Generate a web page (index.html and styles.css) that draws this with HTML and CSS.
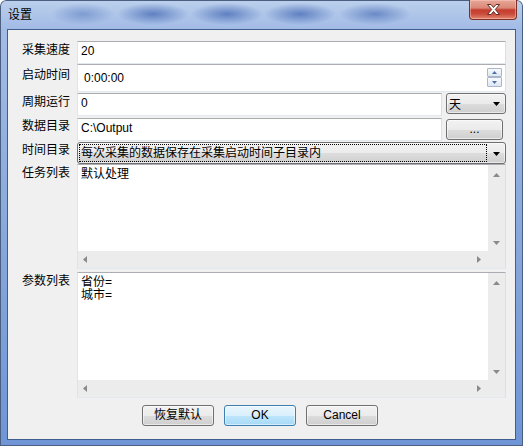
FILE: index.html
```html
<!DOCTYPE html>
<html lang="zh">
<head>
<meta charset="utf-8">
<title>设置</title>
<link rel="stylesheet" href="styles.css">
</head>
<body>
<div class="window">
  <div class="titlebar">
    <span class="title">设置</span>
    <div class="close">
      <svg width="13" height="11" viewBox="0 0 13 11"><path d="M0.5 0.5h3.5l2.5 3 2.5-3h3.5l-4.2 5 4.2 5h-3.5l-2.5-3-2.5 3h-3.5l4.2-5z" fill="#fff" stroke="#6b2a22" stroke-width="1"/></svg>
    </div>
  </div>
  <div class="client">
    <div class="row r1">
      <div class="lbl">采集速度</div>
      <div class="edit grow">20</div>
    </div>
    <div class="row r2">
      <div class="lbl">启动时间</div>
      <div class="edit grow spin-edit">
        <span class="spin-text">0:00:00</span>
        <div class="spin">
          <div class="spin-btn up"><svg width="5" height="3" viewBox="0 0 5 3"><path d="M0 3h5L2.5 0z" fill="#4d6fa8"/></svg></div>
          <div class="spin-btn down"><svg width="5" height="3" viewBox="0 0 5 3"><path d="M0 0h5L2.5 3z" fill="#4d6fa8"/></svg></div>
        </div>
      </div>
    </div>
    <div class="row r3">
      <div class="lbl">周期运行</div>
      <div class="edit short">0</div>
      <div class="btn combo small">
        <span class="combo-text">天</span>
        <span class="drop"><svg width="7" height="4" viewBox="0 0 7 4"><path d="M0 0h7L3.5 4z" fill="#000"/></svg></span>
      </div>
    </div>
    <div class="row r4">
      <div class="lbl">数据目录</div>
      <div class="edit short">C:\Output</div>
      <div class="btn dots">...</div>
    </div>
    <div class="row r5">
      <div class="lbl">时间目录</div>
      <div class="btn combo wide">
        <span class="focus">每次采集的数据保存在采集启动时间子目录内</span>
        <span class="drop"><svg width="7" height="4" viewBox="0 0 7 4"><path d="M0 0h7L3.5 4z" fill="#000"/></svg></span>
      </div>
    </div>
    <div class="row r6">
      <div class="lbl">任务列表</div>
      <div class="memo">
        <div class="memo-text">默认处理</div>
        <div class="vbar">
          <svg width="7" height="4" viewBox="0 0 7 4"><path d="M0 4h7L3.5 0z" fill="#8a8a8a"/></svg>
          <svg width="7" height="4" viewBox="0 0 7 4"><path d="M0 0h7L3.5 4z" fill="#8a8a8a"/></svg>
        </div>
        <div class="hbar">
          <svg width="4" height="7" viewBox="0 0 4 7"><path d="M4 0v7L0 3.5z" fill="#8a8a8a"/></svg>
          <svg width="4" height="7" viewBox="0 0 4 7"><path d="M0 0v7L4 3.5z" fill="#8a8a8a"/></svg>
        </div>
        <div class="corner"></div>
      </div>
    </div>
    <div class="row r7">
      <div class="lbl">参数列表</div>
      <div class="memo">
        <div class="memo-text">省份=<br>城市=</div>
        <div class="vbar">
          <svg width="7" height="4" viewBox="0 0 7 4"><path d="M0 4h7L3.5 0z" fill="#8a8a8a"/></svg>
          <svg width="7" height="4" viewBox="0 0 7 4"><path d="M0 0h7L3.5 4z" fill="#8a8a8a"/></svg>
        </div>
        <div class="hbar">
          <svg width="4" height="7" viewBox="0 0 4 7"><path d="M4 0v7L0 3.5z" fill="#8a8a8a"/></svg>
          <svg width="4" height="7" viewBox="0 0 4 7"><path d="M0 0v7L4 3.5z" fill="#8a8a8a"/></svg>
        </div>
        <div class="corner"></div>
      </div>
    </div>
    <div class="buttons">
      <div class="btn push">恢复默认</div>
      <div class="btn push default">OK</div>
      <div class="btn push">Cancel</div>
    </div>
  </div>
</div>
</body>
</html>
```

FILE: styles.css
```css
* { box-sizing: border-box; }

body {
  margin: 0;
  font-family: "Liberation Sans", "Noto Sans CJK SC", sans-serif;
  font-size: 12px;
  color: #000;
}

.window {
  width: 523px;
  height: 446px;
  border-radius: 6px 6px 0 0;
  background:
    radial-gradient(32px 11px at 83px 14px, rgba(66, 104, 180, .45), rgba(66, 104, 180, 0)),
    radial-gradient(36px 11px at 153px 14px, rgba(60, 98, 176, .7), rgba(60, 98, 176, 0)),
    radial-gradient(36px 11px at 227px 14px, rgba(60, 98, 176, .7), rgba(60, 98, 176, 0)),
    radial-gradient(36px 11px at 300px 14px, rgba(60, 98, 176, .7), rgba(60, 98, 176, 0)),
    radial-gradient(36px 11px at 375px 14px, rgba(60, 98, 176, .6), rgba(60, 98, 176, 0)),
    linear-gradient(#bcd0ec, #a3bce6 28px, #93b1e0 140px, #6f95d6 446px);
  box-shadow: inset 0 0 0 1px #4b5f80;
}

.titlebar {
  height: 29px;
  display: flex;
  align-items: flex-start;
  padding-left: 8px;
}

.title {
  flex: 1;
  padding-top: 6px;
  line-height: 16px;
  font-family: "Noto Sans CJK SC", sans-serif;
}

.close {
  width: 48px;
  height: 20px;
  margin-right: 6px;
  border: 1px solid #7c3026;
  border-top: none;
  border-radius: 0 0 4px 4px;
  background: linear-gradient(#e7a797 0%, #da8877 42%, #c53e30 52%, #c84a3a 72%, #e2866f 100%);
  box-shadow: inset 0 0 0 1px rgba(255, 210, 200, .45);
  display: flex;
  align-items: center;
  justify-content: center;
}

.client {
  margin-left: 7px;
  width: 509px;
  height: 411px;
  background: #f0f0f0;
  border: 1px solid #3f5d8f;
  padding: 11px 9px 0 0;
}

.row {
  display: flex;
  align-items: flex-start;
}

.lbl {
  width: 69px;
  flex: none;
  padding-right: 7px;
  padding-top: 2px;
  text-align: right;
  line-height: 14px;
  white-space: nowrap;
}

.r1 { height: 23px; }
.r2 { height: 28px; }
.r3 { height: 23px; margin-top: 1px; }
.r4 { height: 23px; margin-top: 2px; }
.r5 { height: 22px; margin-top: 1px; }
.r6 { height: 105px; }
.r7 { height: 126px; margin-top: 3px; }

.r2 .lbl { padding-top: 4px; }
.r4 .lbl, .r5 .lbl { padding-top: 1px; }

.edit {
  height: 100%;
  background: #fff;
  border: 1px solid;
  border-color: #abadb3 #dbdfe6 #e3e9ef #e2e3ea;
  padding: 2px 3px 0;
  line-height: 15px;
  white-space: nowrap;
}

.grow { flex: 1; }
.short { width: 365px; flex: none; }

.spin-edit {
  display: flex;
  align-items: flex-start;
  padding: 0;
}

.spin-text {
  flex: 1;
  padding: 6px 0 0 6px;
  line-height: 15px;
}

.spin {
  display: flex;
  flex-direction: column;
  margin: 3px 3px 0 0;
}

.spin-btn {
  width: 15px;
  border: 1px solid #a9b6cc;
  border-radius: 1px;
  background: linear-gradient(#f8fafd, #dfe6f0);
  display: flex;
  align-items: center;
  justify-content: center;
}

.spin-btn.up { height: 9px; }
.spin-btn.down { height: 10px; }

.btn {
  border: 1px solid #707070;
  border-radius: 3px;
  background: linear-gradient(#f2f2f2 0%, #ebebeb 50%, #dddddd 51%, #cfcfcf 100%);
  box-shadow: inset 0 0 0 1px rgba(255, 255, 255, .55);
  flex: none;
}

.combo {
  display: flex;
  align-items: stretch;
}

.combo.small {
  width: 60px;
  height: 21px;
  margin-left: 4px;
}

.combo.wide {
  width: 429px;
  height: 22px;
}

.combo-text {
  flex: 1;
  padding-left: 2px;
  line-height: 19px;
  font-family: "Noto Sans CJK SC", sans-serif;
}

.focus {
  flex: 1;
  margin: 1px 0 1px 1px;
  border: 1px dotted #000;
  padding-left: 1px;
  line-height: 16px;
  white-space: nowrap;
  overflow: hidden;
}

.drop {
  width: 18px;
  flex: none;
  display: flex;
  align-items: center;
  justify-content: center;
  padding-top: 1px;
}

.dots {
  width: 57px;
  height: 21px;
  margin: 1px 0 0 4px;
  text-align: center;
  line-height: 19px;
}

.memo {
  flex: 1;
  height: 100%;
  display: grid;
  grid-template-columns: 1fr 17px;
  grid-template-rows: 1fr 17px;
  background: #fff;
  border: 1px solid;
  border-color: #abadb3 #dbdfe6 #e3e9ef #e2e3ea;
}

.memo-text {
  padding: 3px 3px 0;
  line-height: 13px;
}

.vbar {
  background: #ececec;
  display: flex;
  flex-direction: column;
  justify-content: space-between;
  align-items: center;
  padding: 8px 0 6px;
}

.hbar {
  background: #ececec;
  display: flex;
  justify-content: space-between;
  align-items: center;
  padding: 0 7px 0 5px;
}

.corner { background: #ececec; }

.buttons {
  display: flex;
  gap: 10px;
  margin: 7px 0 0 134px;
}

.push {
  width: 72px;
  height: 21px;
  text-align: center;
  line-height: 19px;
}

.push.default {
  border-color: #3c7fb1;
  background: linear-gradient(#eaf6fd 0%, #d9f0fc 50%, #bee6fd 51%, #a7d9f5 100%);
  box-shadow: inset 0 0 0 1px rgba(255, 255, 255, .5);
}
```
